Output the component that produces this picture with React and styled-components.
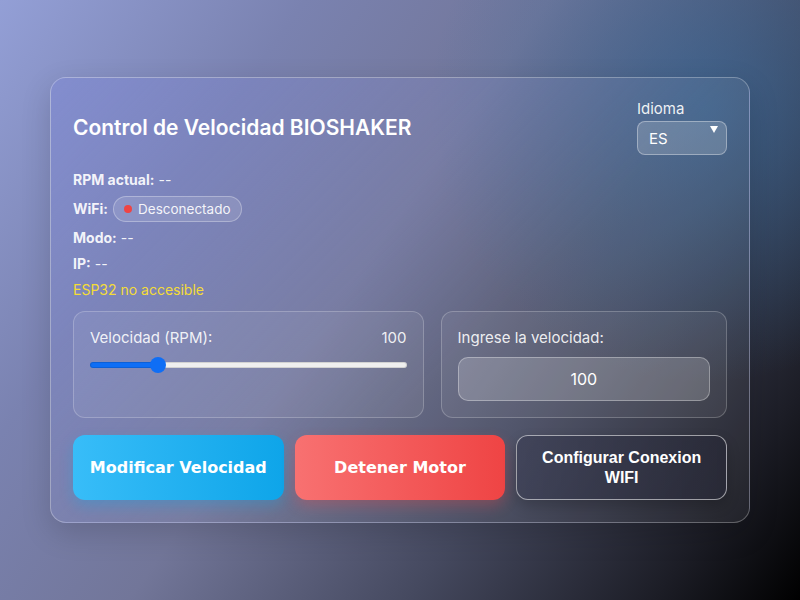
import styled, {createGlobalStyle} from 'styled-components';
import {useState} from 'react';

const GlobalStyle = createGlobalStyle`
    html, body {
        margin: 0;
        height: 100%;
    }
    body {
        font-family: Inter, "Noto Sans", sans-serif;
        color: #fff;
        background:
            radial-gradient(circle at 88% 18%, rgba(50, 110, 165, 0.55), rgba(50, 110, 165, 0) 32%),
            linear-gradient(125deg, #939fd6 0%, #7a82b0 25%, #727699 45%, #45495f 68%, #1c1d26 88%, #000 100%);
    }
    #root {
        height: 100%;
    }
`

function App () {
    const [speed, setSpeed] = useState(100);
    const pct = (speed / 500) * 100;

    return (
        <Page>
            <GlobalStyle />
            <Card>
                <Header>
                    <Title>Control de Velocidad BIOSHAKER</Title>
                    <LangBox>
                        <LangLabel>Idioma</LangLabel>
                        <LangSelect>
                            ES
                            <Caret />
                        </LangSelect>
                    </LangBox>
                </Header>

                <Info>
                    <InfoRow><b>RPM actual:</b> --</InfoRow>
                    <InfoRow>
                        <b>WiFi:</b>
                        <Pill><Dot /> Desconectado</Pill>
                    </InfoRow>
                    <InfoRow><b>Modo:</b> --</InfoRow>
                    <InfoRow><b>IP:</b> --</InfoRow>
                    <Warning>ESP32 no accesible</Warning>
                </Info>

                <Panels>
                    <Panel>
                        <PanelHead>
                            <span>Velocidad (RPM):</span>
                            <span>{speed}</span>
                        </PanelHead>
                        <Slider
                            type="range"
                            min="0"
                            max="500"
                            value={speed}
                            onChange={e => setSpeed(Number(e.target.value))}
                            style={{'--fill': pct + '%'}}
                        />
                    </Panel>
                    <Panel>
                        <PanelHead>Ingrese la velocidad:</PanelHead>
                        <SpeedInput value={speed} onChange={e => setSpeed(Number(e.target.value) || 0)} />
                    </Panel>
                </Panels>

                <Actions>
                    <ActionButton variant="blue">Modificar Velocidad</ActionButton>
                    <ActionButton variant="red">Detener Motor</ActionButton>
                    <ActionButton variant="dark">Configurar Conexion WIFI</ActionButton>
                </Actions>
            </Card>
        </Page>
    );
}

export default App;


const Page = styled.div`
    height: 100%;
    display: flex;
    align-items: center;
    justify-content: center;
`

const Card = styled.div`
    box-sizing: border-box;
    width: 700px;
    padding: 22px;
    border-radius: 16px;
    border: 1px solid rgba(255, 255, 255, 0.28);
    background: linear-gradient(135deg, rgba(120, 130, 215, 0.4), rgba(255, 255, 255, 0.06) 60%);
    box-shadow: 0 10px 30px rgba(0, 0, 0, 0.15);
`

const Header = styled.div`
    display: flex;
    align-items: center;
    justify-content: space-between;
`

const Title = styled.h1`
    margin: 0;
    font-size: 21px;
    font-weight: 600;
    color: #fff;
`

const LangBox = styled.div`
    display: flex;
    flex-direction: column;
    gap: 3px;
`

const LangLabel = styled.div`
    font-size: 15px;
    line-height: 18px;
    color: rgba(255, 255, 255, 0.92);
`

const LangSelect = styled.div`
    position: relative;
    box-sizing: border-box;
    width: 90px;
    height: 34px;
    padding: 0 11px;
    display: flex;
    align-items: center;
    font-size: 15px;
    border-radius: 8px;
    border: 1px solid rgba(255, 255, 255, 0.35);
    background: rgba(255, 255, 255, 0.17);
`

const Caret = styled.span`
    position: absolute;
    right: 8px;
    top: 4px;
    width: 0;
    height: 0;
    border-left: 4px solid transparent;
    border-right: 4px solid transparent;
    border-top: 7px solid #fff;
`

const Info = styled.div`
    margin-top: 15px;
    display: flex;
    flex-direction: column;
    gap: 6px;
    font-size: 14px;
`

const InfoRow = styled.div`
    display: flex;
    align-items: center;
    gap: 4px;
    line-height: 20px;
    color: rgba(255, 255, 255, 0.92);

    b {
        font-weight: 700;
    }
`

const Pill = styled.span`
    box-sizing: border-box;
    height: 26px;
    margin-left: 1px;
    display: inline-flex;
    align-items: center;
    gap: 6px;
    padding: 0 10px;
    font-size: 13.5px;
    border-radius: 13px;
    border: 1px solid rgba(255, 255, 255, 0.3);
    background: rgba(255, 255, 255, 0.12);
`

const Dot = styled.span`
    width: 8px;
    height: 8px;
    border-radius: 50%;
    background: #ef4444;
`

const Warning = styled.div`
    font-size: 14px;
    line-height: 20px;
    color: #f4dc36;
`

const Panels = styled.div`
    margin-top: 11px;
    display: grid;
    grid-template-columns: 350fr 286fr;
    gap: 17px;
`

const Panel = styled.div`
    box-sizing: border-box;
    padding: 16px 16px;
    border-radius: 12px;
    border: 1px solid rgba(255, 255, 255, 0.22);
    background: rgba(255, 255, 255, 0.06);
`

const PanelHead = styled.div`
    display: flex;
    justify-content: space-between;
    font-size: 15px;
    line-height: 20px;
    color: rgba(255, 255, 255, 0.9);
`

const Slider = styled.input`
    -webkit-appearance: none;
    appearance: none;
    display: block;
    width: 100%;
    height: 16px;
    margin: 9px 0 0;
    background: transparent;

    &::-webkit-slider-runnable-track {
        height: 6px;
        border-radius: 3px;
        background: linear-gradient(to right, #0f6ef5 var(--fill), #efefef var(--fill));
        box-shadow: inset 0 0 0 1px rgba(0, 0, 0, 0.12);
    }

    &::-webkit-slider-thumb {
        -webkit-appearance: none;
        width: 16px;
        height: 16px;
        margin-top: -5px;
        border-radius: 50%;
        background: #0f6ef5;
    }
`

const SpeedInput = styled.input`
    box-sizing: border-box;
    display: block;
    width: 100%;
    height: 44px;
    margin-top: 9px;
    border-radius: 10px;
    border: 1px solid rgba(255, 255, 255, 0.32);
    background: rgba(255, 255, 255, 0.18);
    color: #fff;
    font-family: Inter, sans-serif;
    font-size: 16px;
    text-align: center;
    outline: none;
`

const variants = {
    blue: `
        font-family: "DejaVu Sans", sans-serif;
        background: linear-gradient(90deg, #38bdf8, #0ea5e9);
        border: none;
        box-shadow: 0 6px 14px rgba(14, 165, 233, 0.3);
    `,
    red: `
        font-family: "DejaVu Sans", sans-serif;
        background: linear-gradient(90deg, #f87171, #ef4444);
        border: none;
        box-shadow: 0 6px 14px rgba(239, 68, 68, 0.3);
    `,
    dark: `
        font-family: "Liberation Sans", Arial, sans-serif;
        background: linear-gradient(90deg, rgba(60, 63, 85, 0.7), rgba(40, 41, 55, 0.75));
        border: 1px solid rgba(255, 255, 255, 0.55);
        box-shadow: 0 6px 14px rgba(0, 0, 0, 0.2);
    `,
}

const Actions = styled.div`
    margin-top: 17px;
    display: grid;
    grid-template-columns: repeat(3, 1fr);
    gap: 11px;
`

const ActionButton = styled.button`
    box-sizing: border-box;
    height: 65px;
    padding: 0 10px;
    border-radius: 12px;
    color: #fff;
    font-size: 16px;
    font-weight: 700;
    line-height: 20px;
    cursor: pointer;
    ${p => variants[p.variant]}
`
